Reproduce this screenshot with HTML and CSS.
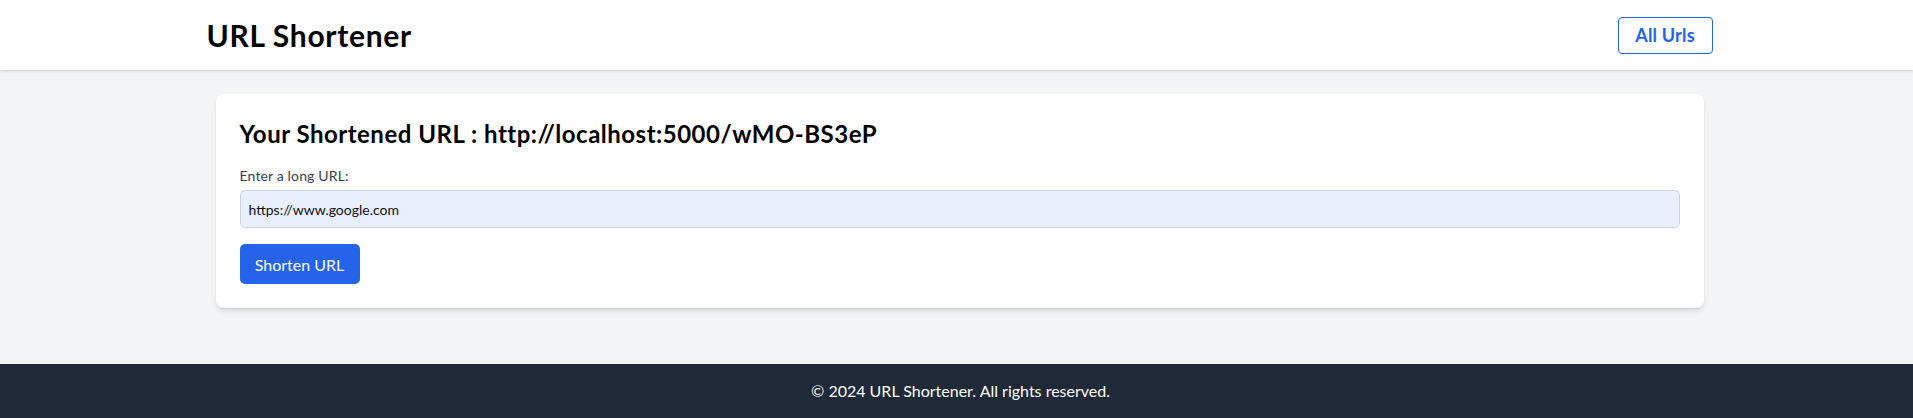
FILE: index.html
```html
<!DOCTYPE html>
<html lang="en">
<head>
<meta charset="utf-8">
<title>URL Shortener</title>
<link rel="stylesheet" href="styles.css">
</head>
<body>
<header class="site-header">
  <div class="header-inner">
    <h1 class="brand">URL Shortener</h1>
    <a class="nav-btn" href="#">All Urls</a>
  </div>
</header>
<main class="main">
  <div class="main-inner">
    <section class="card">
      <h2 class="result">Your Shortened URL : http://localhost:5000/wMO-BS3eP</h2>
      <form class="form">
        <label class="label" for="url">Enter a long URL:</label>
        <input class="input" id="url" type="text" value="https://www.google.com">
        <button class="submit" type="button">Shorten URL</button>
      </form>
    </section>
  </div>
</main>
<footer class="site-footer">© 2024 URL Shortener. All rights reserved.</footer>
</body>
</html>
```
FILE: styles.css
```css
* { box-sizing: border-box; }
html, body { margin: 0; padding: 0; }
body {
  font-family: "Lato", "Open Sans", sans-serif;
  background: #f3f4f6;
  color: #000;
  min-height: 100vh;
  display: flex;
  flex-direction: column;
}
.site-header {
  background: #fff;
  box-shadow: 0 1px 3px rgba(0,0,0,0.12), 0 1px 2px rgba(0,0,0,0.06);
  height: 70px;
  display: flex;
  align-items: center;
}
.header-inner {
  width: 100%;
  max-width: 1536px;
  margin: 0 auto;
  padding: 0 12px 0 18px;
  display: flex;
  align-items: center;
  justify-content: space-between;
}
.brand {
  margin: 0;
  font-size: 30px;
  line-height: 36px;
  font-weight: 700;
  letter-spacing: 0.7px;
}
.nav-btn {
  display: inline-flex;
  align-items: center;
  justify-content: center;
  width: 95px;
  height: 37px;
  border: 1px solid #2563eb;
  border-radius: 4px;
  color: #2563eb;
  font-weight: 700;
  font-size: 18px;
  text-decoration: none;
  letter-spacing: 0.2px;
}
.main {
  flex: 1;
  padding-top: 24px;
}
.main-inner {
  max-width: 1536px;
  margin: 0 auto;
  padding: 0 21px 0 27px;
}
.card {
  background: #fff;
  border-radius: 8px;
  box-shadow: 0 4px 6px -1px rgba(0,0,0,0.1), 0 2px 4px -2px rgba(0,0,0,0.1);
  padding: 24px;
}
.result {
  margin: 0 0 16px;
  font-size: 24px;
  line-height: 32px;
  font-weight: 700;
  letter-spacing: 0.5px;
}
.form {
  display: flex;
  flex-direction: column;
  align-items: flex-start;
}
.label {
  font-size: 14px;
  line-height: 20px;
  color: #374151;
  margin-bottom: 4px;
  letter-spacing: 0.15px;
}
.input {
  width: 100%;
  height: 38px;
  padding: 0 8px;
  border: 1px solid #cbd5e1;
  border-radius: 5px;
  background: #e8f0fe;
  font-family: inherit;
  font-size: 14px;
  color: #111;
  margin-bottom: 16px;
}
.submit {
  width: 120px;
  height: 40px;
  border: none;
  border-radius: 5px;
  background: #2563eb;
  color: #fff;
  font-family: inherit;
  font-size: 16px;
}
.site-footer {
  background: #1f2937;
  color: #fff;
  text-align: center;
  font-size: 16px;
  line-height: 24px;
  padding: 15px 0 15px 8px;
}
```
